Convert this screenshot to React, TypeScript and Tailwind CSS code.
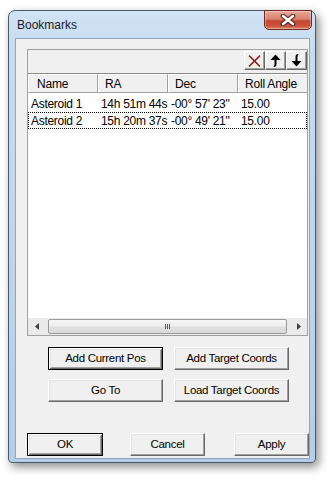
import React from "react";

const F = "font-['Liberation_Sans',Arial,sans-serif]";

function Btn({ children, w, def }: { children: React.ReactNode; w: string; def?: boolean }) {
  const cls = def
    ? "border border-black shadow-[inset_1px_1px_#ffffff,inset_-1px_-1px_#696969,inset_2px_2px_#e3e3e3,inset_-2px_-2px_#a0a0a0]"
    : "border border-t-white border-l-white border-r-[#696969] border-b-[#696969] shadow-[inset_-1px_-1px_#a0a0a0,inset_1px_1px_#e3e3e3]";
  return (
    <div className={`${w} h-[23px] bg-[#f0f0f0] ${cls} flex items-center justify-center text-[11.5px] text-black tracking-[-0.3px]`}>
      {children}
    </div>
  );
}

function ToolBtn({ children }: { children: React.ReactNode }) {
  return (
    <div className="w-[21px] h-[19px] bg-[#f0f0f0] border border-t-white border-l-white border-r-[#696969] border-b-[#696969] shadow-[inset_-1px_-1px_#a0a0a0] flex items-center justify-center">
      {children}
    </div>
  );
}

const rows = [
  ["Asteroid 1", "14h 51m 44s", "-00° 57' 23\"", "15.00"],
  ["Asteroid 2", "15h 20m 37s", "-00° 49' 21\"", "15.00"],
];

export default function App() {
  return (
    <div className={`w-[335px] h-[478px] bg-white pt-[10px] pl-[8px] ${F}`}>
      <div className="relative w-[308px] h-[453px] rounded-t-[7px] rounded-b-[4px] border border-[#49596b] bg-[linear-gradient(180deg,#d0e2f4_0%,#c6dcf1_10%,#bcd5ed_60%,#b4cee8_100%)] shadow-[3px_4px_10px_rgba(0,0,0,0.45)] flex flex-col">
        {/* title bar */}
        <div className="h-[27px] flex items-center pl-[8px] text-[12px] text-[#1a1a1a]">Bookmarks</div>
        <div className="absolute top-[-1px] right-[3px] w-[48px] h-[20px] rounded-b-[5px] border border-[#6e2a20] bg-[linear-gradient(180deg,#e9a99b_0%,#d9806c_45%,#c24632_55%,#c9513c_80%,#dc7a5e_100%)] shadow-[inset_0_0_0_1px_rgba(255,255,255,0.35)] flex items-center justify-center">
          <svg width="16" height="12" viewBox="0 0 16 12">
            <path d="M3 2 L13 10 M13 2 L3 10" stroke="#4a1d16" strokeWidth="4.6" strokeLinecap="round" />
            <path d="M3 2 L13 10 M13 2 L3 10" stroke="#ffffff" strokeWidth="2.6" strokeLinecap="round" />
          </svg>
        </div>
        {/* client */}
        <div className="ml-[6px] mr-[5px] mb-[3px] flex-1 border border-[#8ea6be] bg-[#f0f0f0] flex flex-col">
          {/* bookmarks box */}
          <div className="ml-[11px] mt-[10px] w-[281px] h-[287px] border border-[#a0a0a0] flex flex-col">
            <div className="h-[23px] flex justify-end items-start pt-[1px]">
              <ToolBtn>
                <svg width="15" height="14" viewBox="0 0 15 14">
                  <path d="M2 1.5 L13 12.5 M13 1.5 L2 12.5" stroke="#8b1a1a" strokeWidth="1.6" />
                </svg>
              </ToolBtn>
              <ToolBtn>
                <svg width="15" height="15" viewBox="0 0 15 15">
                  <path d="M2.5 7 L7.5 1.5 L12.5 7 Z" fill="#000" />
                  <path d="M6.5 7 L8.5 7 L8.5 11 Q8.5 13 7 14 L5.5 14 Q6.5 12.5 6.5 11 Z" fill="#000" />
                </svg>
              </ToolBtn>
              <ToolBtn>
                <svg width="15" height="15" viewBox="0 0 15 15">
                  <path d="M2.5 8 L7.5 13.5 L12.5 8 Z" fill="#000" />
                  <path d="M6.5 8 L8.5 8 L8.5 4 Q8.5 2.5 9.5 1 L8 1 Q6.5 2 6.5 4 Z" fill="#000" />
                </svg>
              </ToolBtn>
            </div>
            {/* list view */}
            <div className="flex-1 border-t border-[#8a8a8a] bg-white flex flex-col overflow-hidden">
              <div className="h-[19px] flex shrink-0 bg-[#f0f0f0] text-[12px] text-black tracking-[-0.2px]">
                {["Name", "RA", "Dec", "Roll Angle"].map((h, i) => (
                  <div
                    key={h}
                    className={`w-[70px] shrink-0 h-full flex items-center border-t border-l border-t-white border-l-white border-r border-b border-r-[#a0a0a0] border-b-[#a0a0a0] ${i === 0 ? "pl-[8px]" : "pl-[6px]"}`}
                  >
                    {h}
                  </div>
                ))}
              </div>
              <div className="flex-1 pt-[2px] text-[12px] text-black tracking-[-0.3px]">
                {rows.map((r, ri) => (
                  <div
                    key={ri}
                    className={`h-[17px] flex items-center border border-dotted ${ri === 1 ? "border-black" : "border-transparent"}`}
                  >
                    {r.map((c, ci) => (
                      <div key={ci} className={`shrink-0 whitespace-nowrap ${ci === 0 ? "pl-[2px] w-[69px]" : "pl-[3px] w-[70px]"}`}>
                        {c}
                      </div>
                    ))}
                  </div>
                ))}
              </div>
              {/* horizontal scrollbar */}
              <div className="h-[17px] shrink-0 flex items-center bg-[#eaeaea]">
                <div className="w-[17px] h-full flex items-center justify-center">
                  <svg width="4" height="7" viewBox="0 0 4 7"><path d="M4 0 L0 3.5 L4 7 Z" fill="#404040" /></svg>
                </div>
                <div className="flex-1 h-full flex items-center pl-[3px] pr-[2px]">
                  <div className="w-[239px] h-[15px] rounded-[2px] border border-[#9a9a9a] bg-[linear-gradient(180deg,#f8f8f8_0%,#eeeeee_45%,#e0e0e0_55%,#d8d8d8_100%)] flex items-center justify-center gap-[1px]">
                    <div className="w-[1px] h-[5px] bg-[#555]" />
                    <div className="w-[1px] h-[5px] bg-[#555]" />
                    <div className="w-[1px] h-[5px] bg-[#555]" />
                  </div>
                </div>
                <div className="w-[17px] h-full flex items-center justify-center">
                  <svg width="4" height="7" viewBox="0 0 4 7"><path d="M0 0 L4 3.5 L0 7 Z" fill="#404040" /></svg>
                </div>
              </div>
            </div>
          </div>
          {/* action buttons */}
          <div className="ml-[32px] mt-[11px] grid grid-cols-[115px_115px] gap-x-[11px] gap-y-[9px]">
            <Btn w="w-[115px]" def>Add Current Pos</Btn>
            <Btn w="w-[115px]">Add Target Coords</Btn>
            <Btn w="w-[115px]">Go To</Btn>
            <Btn w="w-[115px]">Load Target Coords</Btn>
          </div>
          <div className="mt-auto mb-[2px] ml-[11px] flex">
            <Btn w="w-[76px]" def>OK</Btn>
            <div className="ml-[27px]"><Btn w="w-[75px]">Cancel</Btn></div>
            <div className="ml-[29px]"><Btn w="w-[75px]">Apply</Btn></div>
          </div>
        </div>
      </div>
    </div>
  );
}
